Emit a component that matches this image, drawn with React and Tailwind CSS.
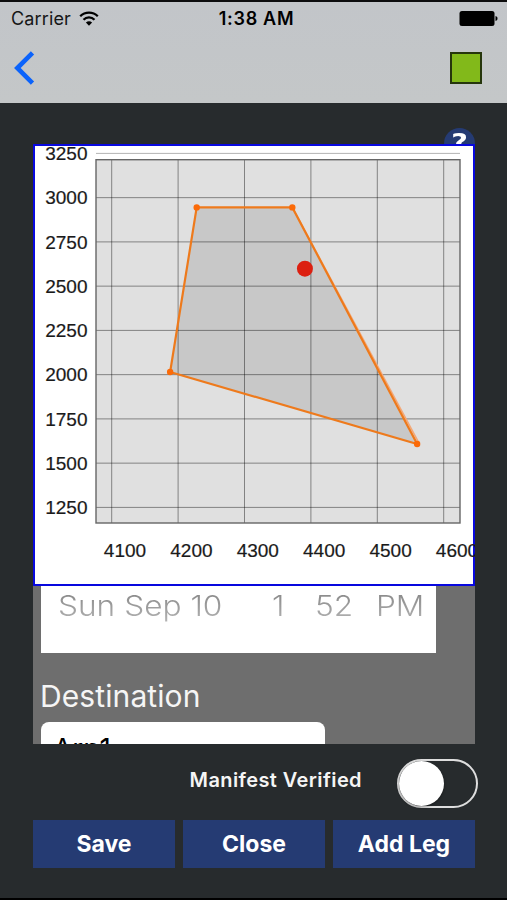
import { useState } from 'react'

const Y_TICKS = [3250, 3000, 2750, 2500, 2250, 2000, 1750, 1500, 1250]
const X_TICKS = [4100, 4200, 4300, 4400, 4500, 4600]

const ENVELOPE = [
  [4228, 2945],
  [4372, 2945],
  [4560, 1608],
  [4188, 2015],
]
const CURRENT = [4391, 2599]

const PLOT = { left: 63, top: 15.7, right: 427, bottom: 379 }

const xScale = (v) => 78.7 + (v - 4100) * 0.664
const yScale = (v) => 9.4 + (3250 - v) * 0.177

function StatusBar() {
  return (
    <div className="grid h-[33px] grid-cols-3 items-center pl-[11px] pr-[9px] text-[18px] leading-none text-[#151617]">
      <div className="flex items-center gap-[8px]">
        <span className="tracking-[0.15px]">Carrier</span>
        <svg className="mb-px h-[15px] w-[20px]" viewBox="0 0 20 15" fill="none" stroke="#000" strokeWidth="2.3">
          <path d="M1.2 5.2a12.6 12.6 0 0 1 17.6 0" />
          <path d="M4.5 8.7a7.8 7.8 0 0 1 11 0" />
          <path d="M10 14.8 6.9 11.6a4.5 4.5 0 0 1 6.2 0Z" fill="#000" stroke="none" />
        </svg>
      </div>
      <span className="whitespace-nowrap pl-1 text-center text-[18px] font-semibold tracking-[0.7px] text-black">1:38 AM</span>
      <svg className="h-[15px] w-[39px] justify-self-end" viewBox="0 0 39 15">
        <rect x="0.5" y="0" width="35" height="15" rx="2.5" fill="#000" />
        <path d="M36.5 5c1.6.5 2 1.4 2 2.5s-.4 2-2 2.5Z" fill="#000" />
      </svg>
    </div>
  )
}

function Header() {
  return (
    <header className="h-[103px] shrink-0 border-t-2 border-[#0c0c0d] bg-linear-to-b from-[#c2c5c9] to-[#c4c7c8]">
      <StatusBar />
      <div className="flex items-center justify-between pl-[14px] pr-[25px] pt-4">
        <button type="button" aria-label="Back">
          <svg className="h-[34px] w-[22px]" viewBox="0 0 22 34" fill="none" stroke="#0b63fb" strokeWidth="4.6">
            <path d="M18.5 1.8 3.3 17l15.2 15.2" />
          </svg>
        </button>
        <div className="h-8 w-8 border-2 border-[#26360c] bg-[#82b91a]" />
      </div>
    </header>
  )
}

function EnvelopeChart() {
  const points = ENVELOPE.map(([x, y]) => `${xScale(x)},${yScale(y)}`).join(' ')

  return (
    <div className="relative h-[442px] shrink-0 overflow-hidden bg-white">
      <div className="absolute inset-0 border-2 border-[#0808de]" />
      <svg className="relative h-[442px] w-[442px]" viewBox="0 0 442 442">
        <rect
          x={PLOT.left}
          y={PLOT.top}
          width={PLOT.right - PLOT.left}
          height={PLOT.bottom - PLOT.top}
          fill="#e0e0e0"
        />
        <polygon points={points} fill="#c8c8c8" />

        {/* Grid */}
        {Y_TICKS.map((v) => (
          <line
            key={v}
            x1={PLOT.left}
            x2={PLOT.right}
            y1={yScale(v)}
            y2={yScale(v)}
            stroke="#000"
            strokeOpacity={v === 3250 ? 0.3 : 0.42}
          />
        ))}
        {X_TICKS.map((v) => (
          <line
            key={v}
            x1={xScale(v)}
            x2={xScale(v)}
            y1={PLOT.top}
            y2={PLOT.bottom}
            stroke="#000"
            strokeOpacity="0.42"
          />
        ))}
        <rect
          x={PLOT.left}
          y={PLOT.top}
          width={PLOT.right - PLOT.left}
          height={PLOT.bottom - PLOT.top}
          fill="none"
          stroke="#666"
          strokeWidth="1.4"
        />

        {/* Envelope */}
        <line
          x1={xScale(4372)}
          y1={yScale(2945)}
          x2={xScale(4563)}
          y2={yScale(1612)}
          stroke="#f3a878"
          strokeWidth="1.6"
        />
        <polygon points={points} fill="none" stroke="#ee7a1c" strokeWidth="2.2" />
        {ENVELOPE.map(([x, y]) => (
          <circle key={`${x}-${y}`} cx={xScale(x)} cy={yScale(y)} r="3.2" fill="#fb6a08" />
        ))}
        <circle cx={xScale(CURRENT[0])} cy={yScale(CURRENT[1])} r="8" fill="#dc1f10" />

        {/* Labels */}
        <g fill="#1a1a1a" stroke="#1a1a1a" strokeWidth="0.2" fontSize="19" fontFamily="Liberation Sans, sans-serif">
          {Y_TICKS.map((v) => (
            <text key={v} x="54.5" y={yScale(v) + 6.6} textAnchor="end">
              {v}
            </text>
          ))}
          {X_TICKS.map((v) => (
            <text key={v} x={xScale(v) + 13.3} y="413.3" textAnchor="middle">
              {v}
            </text>
          ))}
        </g>
      </svg>
    </div>
  )
}

// Rows away from the centre of the wheel look flattened and fade downwards
function WheelValue({ className, children }) {
  return (
    <span className={className}>
      <span className="inline-block origin-left scale-x-[1.13] whitespace-nowrap bg-linear-to-b from-[#858585] to-[#b4b4b4] bg-clip-text text-transparent">
        {children}
      </span>
    </span>
  )
}

function DateWheel() {
  return (
    <div className="ml-2 flex h-[67px] w-[395px] shrink-0 bg-white pl-[17px] pt-[4px] text-[28px] font-light leading-8">
      <WheelValue className="w-[214px]">Sun Sep 10</WheelValue>
      <WheelValue className="w-[43px]">1</WheelValue>
      <WheelValue className="w-[61px]">52</WheelValue>
      <WheelValue>PM</WheelValue>
    </div>
  )
}

function Toggle({ checked, onChange }) {
  return (
    <button
      type="button"
      role="switch"
      aria-checked={checked}
      onClick={() => onChange(!checked)}
      className="flex h-[49px] w-[81px] items-center rounded-full border-2 border-[#dedede]"
    >
      <span
        className={`h-[45px] w-[45px] rounded-full bg-white shadow-[0_1px_3px_rgba(0,0,0,0.4)] ${checked ? 'translate-x-8' : ''}`}
      />
    </button>
  )
}

function ActionButton({ children }) {
  return (
    <button type="button" className="h-12 flex-1 bg-[#253b73] text-[23px] font-bold text-white">
      {children}
    </button>
  )
}

export default function App() {
  const [verified, setVerified] = useState(false)

  return (
    <div className="flex h-[900px] w-[507px] flex-col overflow-hidden border-b-2 border-black bg-[#272b2d] font-[Inter,sans-serif]">
      <Header />

      <main className="relative ml-[33px] mt-[41px] flex w-[442px] flex-col">
        <div className="absolute right-0 top-[-16px] flex h-[31px] w-[31px] justify-center rounded-full bg-[#253b73] font-[DejaVu_Sans,sans-serif] text-[23px] font-bold leading-[29px] text-white">
          <span className="scale-x-[1.25]">?</span>
        </div>
        <section className="relative flex h-[600px] flex-col overflow-hidden bg-[#6e6e6e]">
          <EnvelopeChart />
          <DateWheel />
          <label className="ml-[7px] mt-[25px] text-[30px] leading-9 tracking-[0.1px] text-[#f5f5f5]">Destination</label>
          <div className="ml-2 mt-2 h-[60px] w-[284px] shrink-0 rounded-lg bg-white pl-[12px] pt-[9px] text-[28px] leading-9 text-black">
            Arp1
          </div>
        </section>

        <div className="mr-[-3px] mt-[15px] flex items-center justify-end gap-[35px]">
          <span className="mb-[8px] text-[20px] font-semibold tracking-[0.4px] text-[#f5f5f5]">Manifest Verified</span>
          <Toggle checked={verified} onChange={setVerified} />
        </div>

        <div className="mt-3 flex gap-2">
          <ActionButton>Save</ActionButton>
          <ActionButton>Close</ActionButton>
          <ActionButton>Add Leg</ActionButton>
        </div>
      </main>
    </div>
  )
}
